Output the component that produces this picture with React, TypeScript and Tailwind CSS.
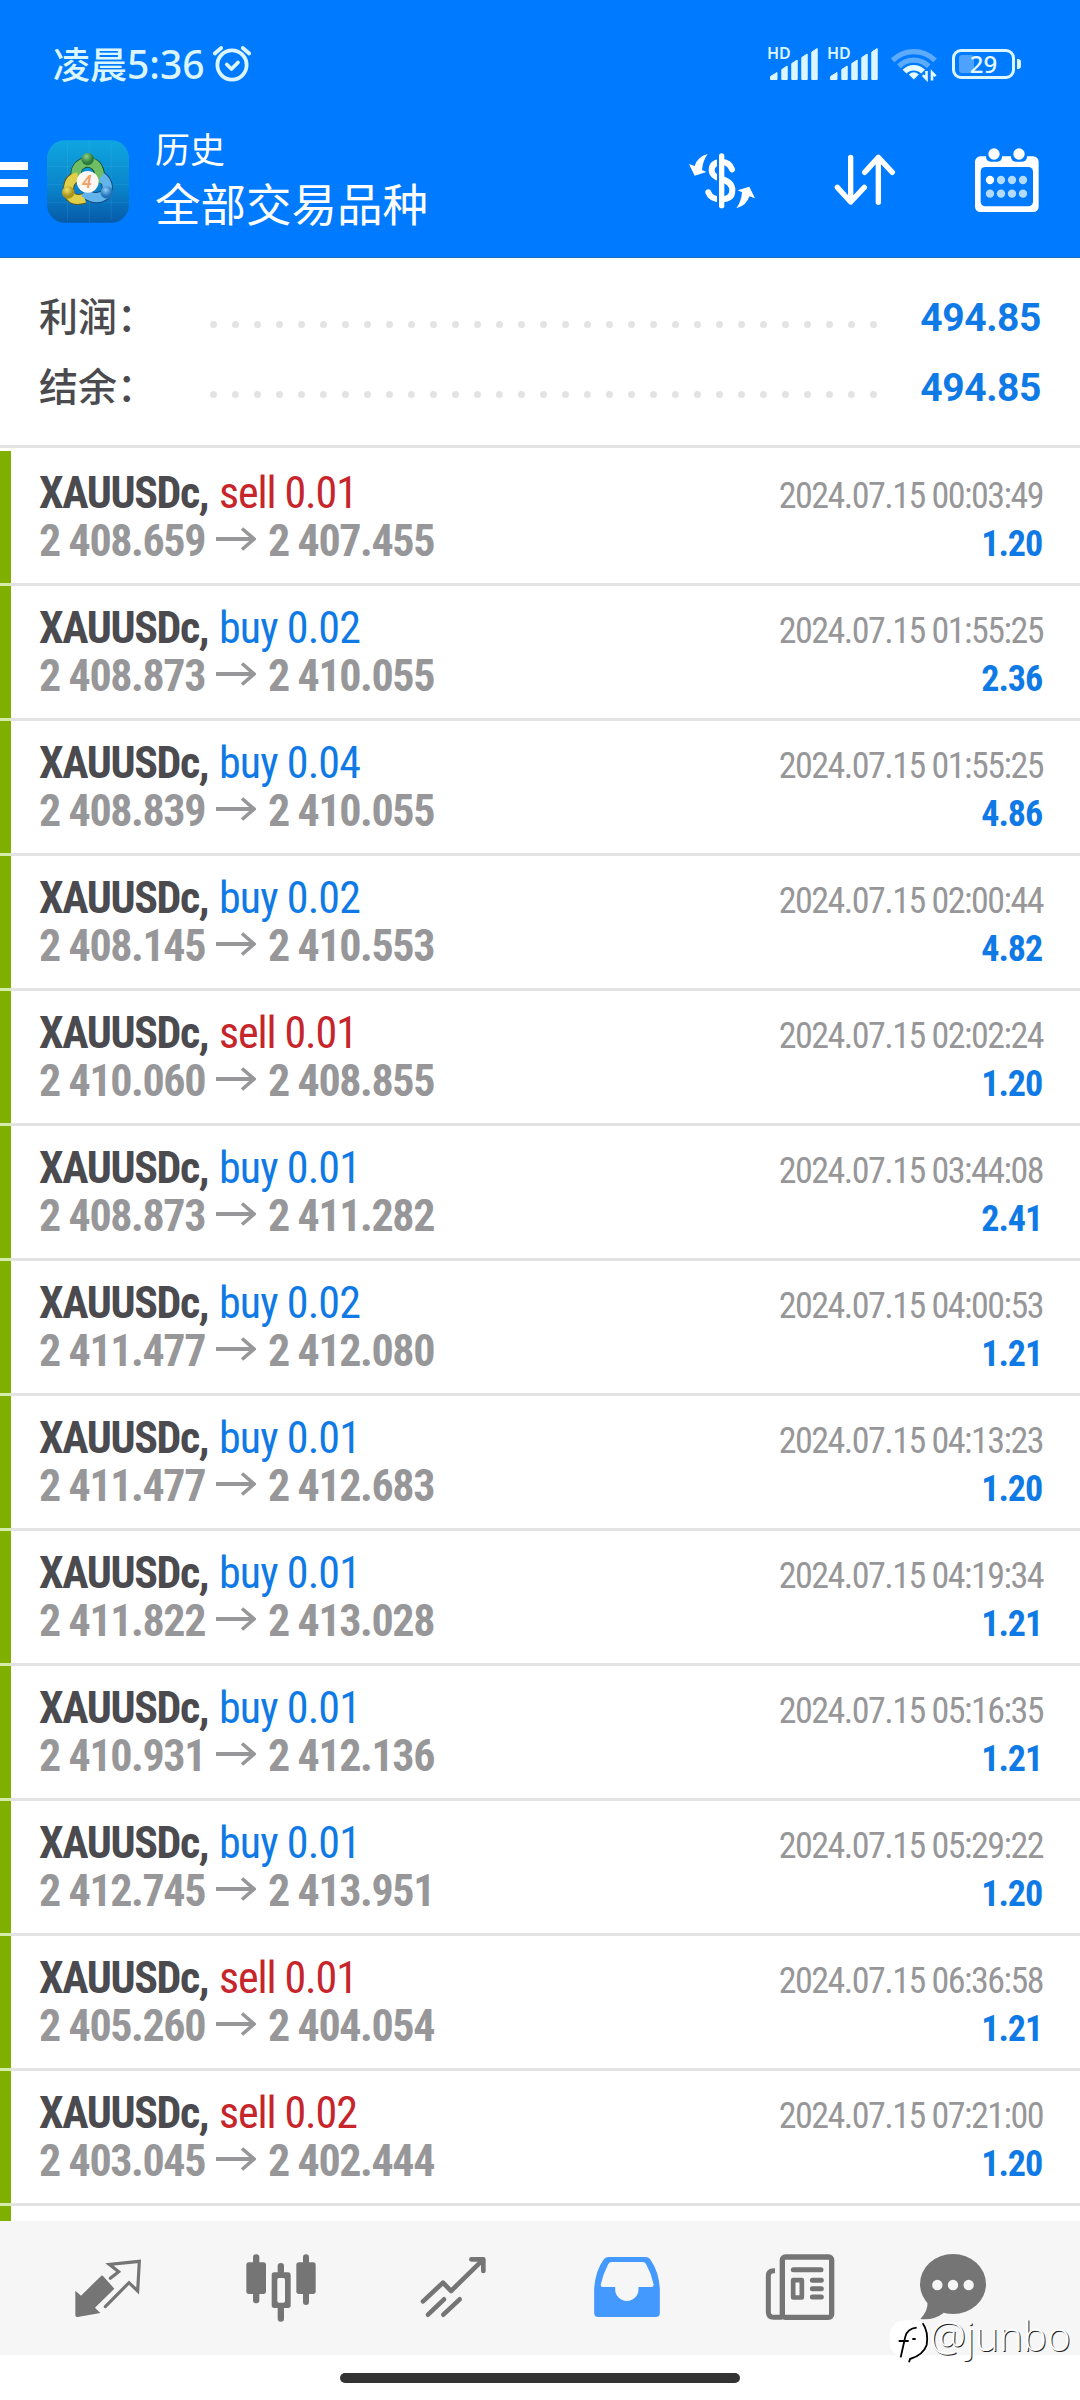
import React from 'react';

type Deal = {
  side: 'buy' | 'sell';
  volume: string;
  open: string;
  close: string;
  time: string;
  profit: string;
};

const deals: Deal[] = [
  { side: 'sell', volume: '0.01', open: '2 408.659', close: '2 407.455', time: '2024.07.15 00:03:49', profit: '1.20' },
  { side: 'buy', volume: '0.02', open: '2 408.873', close: '2 410.055', time: '2024.07.15 01:55:25', profit: '2.36' },
  { side: 'buy', volume: '0.04', open: '2 408.839', close: '2 410.055', time: '2024.07.15 01:55:25', profit: '4.86' },
  { side: 'buy', volume: '0.02', open: '2 408.145', close: '2 410.553', time: '2024.07.15 02:00:44', profit: '4.82' },
  { side: 'sell', volume: '0.01', open: '2 410.060', close: '2 408.855', time: '2024.07.15 02:02:24', profit: '1.20' },
  { side: 'buy', volume: '0.01', open: '2 408.873', close: '2 411.282', time: '2024.07.15 03:44:08', profit: '2.41' },
  { side: 'buy', volume: '0.02', open: '2 411.477', close: '2 412.080', time: '2024.07.15 04:00:53', profit: '1.21' },
  { side: 'buy', volume: '0.01', open: '2 411.477', close: '2 412.683', time: '2024.07.15 04:13:23', profit: '1.20' },
  { side: 'buy', volume: '0.01', open: '2 411.822', close: '2 413.028', time: '2024.07.15 04:19:34', profit: '1.21' },
  { side: 'buy', volume: '0.01', open: '2 410.931', close: '2 412.136', time: '2024.07.15 05:16:35', profit: '1.21' },
  { side: 'buy', volume: '0.01', open: '2 412.745', close: '2 413.951', time: '2024.07.15 05:29:22', profit: '1.20' },
  { side: 'sell', volume: '0.01', open: '2 405.260', close: '2 404.054', time: '2024.07.15 06:36:58', profit: '1.21' },
  { side: 'sell', volume: '0.02', open: '2 403.045', close: '2 402.444', time: '2024.07.15 07:21:00', profit: '1.20' },
];

const summary = [
  { label: '利润：', value: '494.85' },
  { label: '结余：', value: '494.85' },
];

function AlarmIcon() {
  return (
    <svg className="ml-[7px] h-[38px] w-[40px]" viewBox="0 0 40 38" fill="none" stroke="#dcf6ff" strokeWidth="3.8" strokeLinecap="round" strokeLinejoin="round">
      <circle cx="20" cy="21" r="14.6" />
      <path d="M14.8 20.5 19.5 25l6.5-6.5M2.8 9.5 9.2 4M37.2 9.5 30.8 4" />
    </svg>
  );
}

function SignalIcon() {
  return (
    <div className="relative h-[34px] w-[60px]">
      <span className="absolute -top-[2px] -left-px font-['Noto_Sans'] text-[16px] leading-[16px] font-semibold text-[#dcf6ff]">HD</span>
      <svg className="h-[34px] w-[52px]" viewBox="0 0 52 34" fill="#dcf6ff" stroke="#dcf6ff" strokeWidth="1" strokeLinejoin="round">
        <path d="M2.5 29.5 9 25.5V32.5H2.5ZM13.8 22.5 19.2 19V32.5H13.8ZM23.8 16.5 29.2 13V32.5H23.8ZM33.8 10.5 39.2 7V32.5H33.8ZM43.8 5 49.2 1.5V32.5H43.8Z" />
      </svg>
    </div>
  );
}

function WifiIcon() {
  return (
    <svg className="ml-[2px] h-[36px] w-[48px]" viewBox="0 0 48 36" fill="none" strokeWidth="5.4">
      <path d="M2.6 14.4A30 30 0 0 1 45 14.4" stroke="#5cabff" />
      <path d="M8.9 20.2A21.3 21.3 0 0 1 38.7 20.2" stroke="#5cabff" />
      <path d="M14.5 25.6A13 13 0 0 1 33.1 25.6" stroke="#e6faff" />
      <path d="M23.8 33.5 18.8 28.5Q23.8 24 28.8 28.5Z" fill="#e6faff" />
      <path d="M36.5 25V33L32.8 29.2M42 34.5V26.5L45.6 30.2" stroke="#e6faff" strokeWidth="2.6" />
    </svg>
  );
}

function BatteryIcon() {
  return (
    <div className="ml-[14px] flex items-center gap-[2px]">
      <div className="relative flex h-[30px] w-[63px] items-center justify-center rounded-[9px] border-3 border-[#dcf6ff]">
        <div className="absolute top-[3px] left-[4px] h-[18px] w-[15px] rounded-[3px] bg-[#4da3ff]" />
        <span className="relative font-['Noto_Sans'] text-[24px] leading-none font-medium text-[#e6faff]">29</span>
      </div>
      <div className="h-[10px] w-[4px] rounded-r-[3px] bg-[#dcf6ff]" />
    </div>
  );
}

function AppLogo() {
  return (
    <svg className="ml-[19px] h-[83px] w-[82px]" viewBox="0 0 248 250">
      <defs>
        <linearGradient id="tile" x1="0" y1="0" x2="0" y2="1">
          <stop offset="0" stopColor="#0fa6e0" />
          <stop offset="0.55" stopColor="#0a86cc" />
          <stop offset="1" stopColor="#0659a8" />
        </linearGradient>
        <radialGradient id="green" cx="0.4" cy="0.3">
          <stop offset="0" stopColor="#8fd08a" />
          <stop offset="1" stopColor="#2c7c3c" />
        </radialGradient>
        <radialGradient id="gold" cx="0.4" cy="0.3">
          <stop offset="0" stopColor="#f5e26a" />
          <stop offset="1" stopColor="#a8941c" />
        </radialGradient>
        <radialGradient id="sky" cx="0.4" cy="0.3">
          <stop offset="0" stopColor="#8fcdf5" />
          <stop offset="1" stopColor="#2173b8" />
        </radialGradient>
      </defs>
      <rect width="248" height="250" rx="54" fill="url(#tile)" />
      <path d="M0 80H248M0 134H248M0 188H248M62 8V242M128 0V250M194 8V242" stroke="#4cc4ee" strokeOpacity="0.25" strokeWidth="2" />
      <g fill="none" strokeWidth="27">
        <path d="M92 120Q78 84 112 68Q150 62 158 98Q162 112 156 128" stroke="#134f33" strokeWidth="33" />
        <path d="M114 176Q76 188 66 160Q60 118 94 110" stroke="#5e5a17" strokeWidth="33" />
        <path d="M164 110Q190 130 180 162Q150 188 112 158" stroke="#124a80" strokeWidth="33" />
        <path d="M92 120Q78 84 112 68Q150 62 158 98Q162 112 156 128" stroke="#6fbe66" />
        <path d="M114 176Q76 188 66 160Q60 118 94 110" stroke="#e0cf4a" />
        <path d="M164 110Q190 130 180 162Q150 188 112 158" stroke="#63b4ea" />
      </g>
      <circle cx="123" cy="57" r="19" fill="url(#green)" />
      <circle cx="64" cy="158" r="19" fill="url(#gold)" />
      <circle cx="181" cy="158" r="19" fill="url(#sky)" />
      <circle cx="123" cy="126" r="33" fill="#fbf7f3" />
      <text x="121" y="145" textAnchor="middle" fontFamily="Roboto, sans-serif" fontSize="54" fontStyle="italic" fontWeight="500" fill="#f2a066">4</text>
    </svg>
  );
}

function CurrencyIcon() {
  return (
    <svg className="h-[80px] w-[90px]" viewBox="0 0 270 240" fill="none">
      <path d="M156 88Q148 66 124 66Q95 66 95 92Q95 108 124 117Q157 126 157 151Q157 178 124 178Q92 178 85 157" stroke="#fff" strokeWidth="18" strokeLinecap="round" />
      <path d="M114 50V195" stroke="#007aff" strokeWidth="6" />
      <rect x="117" y="40" width="16" height="165" rx="8" fill="#fff" />
      <g fill="#fff">
        <path d="M27 72 44 78Q52 50 83 42Q68 62 66 90L79 96 44 107Z" />
        <path d="M27 72 44 78Q52 50 83 42Q68 62 66 90L79 96 44 107Z" transform="rotate(180 126 123.5)" />
      </g>
    </svg>
  );
}

function SortIcon() {
  return (
    <svg className="ml-[63px] h-[56px] w-[64px]" viewBox="520 399 192 168" fill="none" stroke="#fff" strokeWidth="16" strokeLinecap="round" strokeLinejoin="round">
      <path d="M573 415V548M533 505 573 549 614 505M656 550V417M615 460 656 415 698 460" />
    </svg>
  );
}

function CalendarIcon() {
  return (
    <svg className="ml-[77px] h-[66px] w-[66px]" viewBox="942 380 198 198">
      <rect x="945" y="408" width="191" height="167" rx="16" fill="#fff" />
      <rect x="978" y="395" width="48" height="29" rx="14" fill="#007aff" />
      <rect x="1053" y="395" width="48" height="29" rx="14" fill="#007aff" />
      <circle cx="1002" cy="401" r="17" fill="#fff" />
      <circle cx="1077" cy="401" r="17" fill="#fff" />
      <rect x="962" y="440" width="157" height="118" rx="14" fill="#007aff" />
      {[479, 520].map((cy) =>
        [990, 1023, 1056, 1089].map((cx) => (
          <circle key={`${cx}-${cy}`} cx={cx} cy={cy} r="12.5" fill={cx === 990 && cy === 479 ? '#fff' : '#b3dbff'} />
        ))
      )}
    </svg>
  );
}

function QuotesIcon() {
  return (
    <svg className="size-[72px]" viewBox="38 36 216 216">
      <path d="M48 152 65 167 126 107Q128 105 131 108L165 146 107 203 123 219 55 231Q48 232 48 225Z" fill="#757575" />
      <path d="M153 115 178 95 150 73 240 64 235 153 209 128 138 200" fill="none" stroke="#757575" strokeWidth="9.5" strokeLinecap="round" />
    </svg>
  );
}

function ChartsIcon() {
  return (
    <svg className="size-[72px]" viewBox="555 36 216 216" fill="#757575">
      <rect x="579" y="43" width="19" height="147" rx="9" />
      <rect x="559" y="67" width="59" height="95" rx="8" />
      <rect x="729" y="43" width="18" height="152" rx="9" />
      <rect x="709" y="67" width="58" height="95" rx="8" />
      <rect x="653" y="69" width="19" height="176" rx="9" />
      <rect x="635" y="97" width="57" height="107" rx="8" />
      <rect x="652" y="114" width="23" height="74" rx="5" fill="#f6f6f6" />
    </svg>
  );
}

function TradeIcon() {
  return (
    <svg className="size-[72px]" viewBox="57 36 216 216" fill="none" stroke="#757575" strokeWidth="14" strokeLinecap="round" strokeLinejoin="round">
      <path d="M72 184 132 128 156 153 250 61" />
      <path d="M217 58H253V93" />
      <path d="M87 224 135 178M133 224 182 178" />
    </svg>
  );
}

function HistoryIcon() {
  return (
    <svg className="size-[72px]" viewBox="574.5 36 216 216">
      <path d="M584 145Q588 92 613 58Q618 51 628 51H737Q747 51 752 58Q778 95 781 145V219Q781 231 769 231H596Q584 231 584 219Z" fill="#4499ff" />
      <path d="M604 132Q612 100 626 73Q629 66 637 66H729Q737 66 740 73Q755 100 762 132Q764 141 756 141H717V148A35 35 0 0 1 647 148V141H610Q602 141 604 132Z" fill="#f6f6f6" />
    </svg>
  );
}

function NewsIcon() {
  return (
    <svg className="size-[72px]" viewBox="45 36 216 216" fill="none" stroke="#757575" strokeLinecap="round">
      <rect x="100" y="51" width="148" height="181" rx="9" strokeWidth="16" />
      <path d="M78 92H74Q58 92 58 108V216Q58 232 74 232H100" strokeWidth="15" strokeLinecap="butt" />
      <path d="M133 89H216M190 121H217M190 146H217M190 171H217" strokeWidth="15" />
      <rect x="132.500" y="120.500" width="26" height="52" strokeWidth="14" strokeLinejoin="round" />
    </svg>
  );
}

function ChatIcon() {
  return (
    <svg className="size-[72px]" viewBox="501 36 216 216">
      <g fill="#757575">
        <ellipse cx="609" cy="132" rx="99" ry="90" />
        <path d="M533 184Q534 214 511 237Q550 242 582 218Z" />
      </g>
      <circle cx="562" cy="135" r="15.500" fill="#f6f6f6" />
      <circle cx="609" cy="135" r="15.500" fill="#f6f6f6" />
      <circle cx="656" cy="135" r="15.500" fill="#f6f6f6" />
    </svg>
  );
}

function DealRow({ deal }: { deal: Deal }) {
  return (
    <>
      <div className="flex h-[132px]">
        <div className="w-[11px] bg-[#7fb000]" />
        <div className="flex-1 pt-[18px] pr-[37px] pl-[28px] font-['Roboto_Condensed','Roboto',sans-serif] whitespace-nowrap">
          <div className="flex h-12 items-baseline justify-between">
            <div className="text-[44px] leading-[48px]">
              <span className="inline-block w-[180px] font-bold tracking-[-1.4px] text-[#4a4a4f]">XAUUSDc,</span>
              <span className={deal.side === 'sell' ? 'tracking-[-1.1px] text-[#c5252b]' : 'tracking-[-0.9px] text-[#0f7ae5]'}>
                {deal.side} {deal.volume}
              </span>
            </div>
            <span className="text-[36px] leading-[48px] tracking-[-1.5px] text-[#979799]">{deal.time}</span>
          </div>
          <div className="flex h-12 items-baseline justify-between">
            <div className="text-[44px] leading-[48px] font-bold tracking-[-1.4px] text-[#979799]">
              <span className="inline-block w-[177px]">{deal.open}</span>
              <svg className="mb-[5px] inline-block h-[24px] w-[40px] align-baseline" viewBox="0 0 40 24" fill="none" stroke="#979799">
                <path d="M0 12H38" strokeWidth="4" />
                <path d="M26 1.500 38 12 26 22.500" strokeWidth="3.600" />
              </svg>
              <span className="ml-[12px]">{deal.close}</span>
            </div>
            <span className="pr-px text-[36px] leading-[48px] font-bold tracking-[-1.1px] text-[#0f7ae5]">{deal.profit}</span>
          </div>
        </div>
      </div>
      <div className="flex h-[3px]">
        <div className="w-[11px] bg-[#d5ecac]" />
        <div className="flex-1 bg-[#e3e3e3]" />
      </div>
    </>
  );
}

export default function App() {
  return (
    <div className="relative flex h-[2400px] w-[1080px] flex-col overflow-hidden bg-white font-['Roboto','Noto_Sans_CJK_SC',sans-serif]">
      <header className="h-[258px] border-b border-[#1a6cc4] bg-[#007aff] text-white">
        {/* Status bar */}
        <div className="flex h-[127px] items-center justify-between pr-[59px] pl-[53px]">
          <div className="-mt-px flex items-center text-[#dcf6ff]">
            <span className="font-['Noto_Sans_CJK_SC',sans-serif] text-[37px] leading-none font-medium">凌晨</span>
            <span className="font-['Noto_Sans','Noto_Sans_CJK_SC',sans-serif] text-[39px] leading-none font-medium">5:36</span>
            <AlarmIcon />
          </div>
          <div className="flex items-center">
            <SignalIcon />
            <SignalIcon />
            <WifiIcon />
            <BatteryIcon />
          </div>
        </div>

        {/* Toolbar */}
        <div className="flex h-[108px] items-center">
          <div className="mt-[3px] flex w-[28px] flex-col gap-[9px]">
            <div className="h-[8px] bg-white" />
            <div className="h-[8px] bg-white" />
            <div className="h-[8px] bg-white" />
          </div>
          <AppLogo />
          <div className="-mt-[3px] ml-[26px] w-[525px] font-['Noto_Sans_CJK_SC',sans-serif]">
            <div className="h-[44px] text-[35px] leading-[44px]">历史</div>
            <div className="h-[64px] text-[45.500px] leading-[64px]">全部交易品种</div>
          </div>
          <div className="-mt-[3px] flex items-center">
            <CurrencyIcon />
            <SortIcon />
            <CalendarIcon />
          </div>
        </div>
      </header>

      {/* Totals */}
      <section className="h-[190px] border-b-3 border-[#e3e3e3] pt-[24px] pr-[39px] pl-[39px]">
        {summary.map((item) => (
          <div key={item.label} className="flex h-[70px] items-center">
            <span className="-mt-[6px] w-[171px] font-['Noto_Sans_CJK_SC',sans-serif] text-[39px] leading-none font-medium text-[#4a4a4f]">{item.label}</span>
            <div className="mt-[15px] flex gap-[15px]">
              {[...Array(31)].map((_, i) => (
                <div key={i} className="size-[7px] rounded-full bg-[#e3e3e3]" />
              ))}
            </div>
            <span className="mt-[2px] ml-auto text-[39px] leading-none font-bold tracking-[-0.4px] text-[#0f7ae5]">{item.value}</span>
          </div>
        ))}
      </section>

      {/* Closed deals */}
      <main className="h-[1773px] overflow-hidden pt-[3px]">
        {deals.map((deal) => (
          <DealRow key={deal.time + deal.open} deal={deal} />
        ))}
        <div className="h-[15px] w-[11px] bg-[#7fb000]" />
      </main>

      <nav className="flex h-[134px] items-center bg-[#f6f6f6] pl-[21.500px]">
        <div className="flex w-[173px] justify-center"><QuotesIcon /></div>
        <div className="flex w-[173px] justify-center"><ChartsIcon /></div>
        <div className="flex w-[173px] justify-center"><TradeIcon /></div>
        <div className="flex w-[173px] justify-center"><HistoryIcon /></div>
        <div className="flex w-[173px] justify-center"><NewsIcon /></div>
        <div className="flex w-[132px] justify-center"><ChatIcon /></div>
      </nav>

      <div className="flex justify-center pt-[18px]">
        <div className="h-[10px] w-[400px] rounded-full bg-[#333333]" />
      </div>

      {/* Author tag over the tab bar */}
      <div className="absolute top-[2316px] left-[888px] flex">
        <svg className="h-[50px] w-[44px]" viewBox="414 228 132 150" fill="none">
          <rect x="419" y="241" width="118" height="110" rx="45" fill="#fff" />
          <path d="M452 352 466 290Q472 266 500 263M446 303H476M487 297H497" stroke="#000" strokeWidth="5.500" />
          <path d="M518 250Q536 275 530 315Q520 345 480 357L477 367" stroke="#000" strokeWidth="5.500" />
        </svg>
        <span className="-mt-[6px] -ml-[2px] font-['Open_Sans',sans-serif] text-[40.500px] leading-[52px] font-light text-white [text-shadow:1px_1px_0_#222]">@junbo</span>
      </div>
    </div>
  );
}
